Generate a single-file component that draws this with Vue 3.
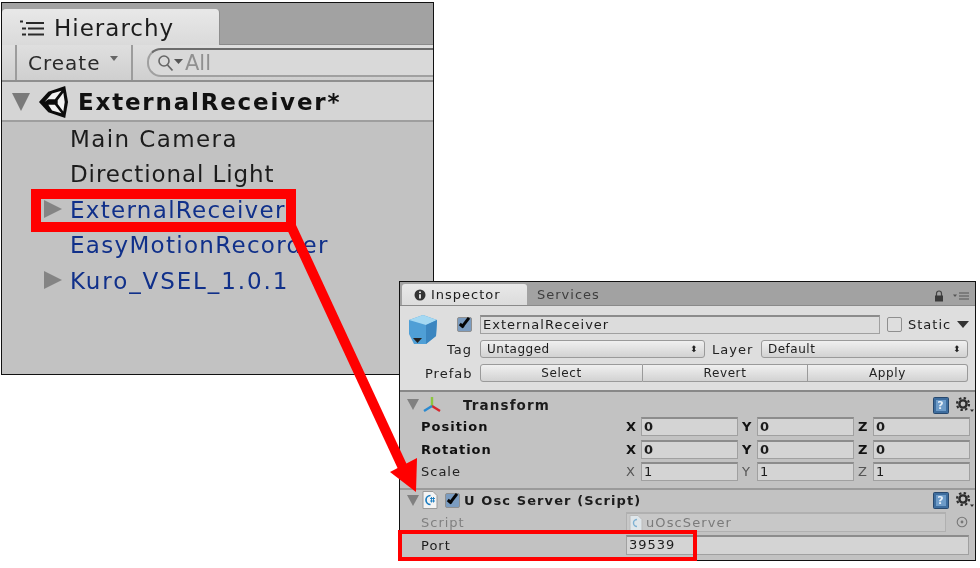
<script setup>
// spacing per row: the original font runs a little wider on some names
const hierarchyRows = [
  { name: 'Main Camera', prefab: false, arrow: false, spacing: 1.4 },
  { name: 'Directional Light', prefab: false, arrow: false, spacing: 0.9 },
  { name: 'ExternalReceiver', prefab: true, arrow: true, spacing: 1.3 },
  { name: 'EasyMotionRecorder', prefab: true, arrow: false, spacing: 1.3 },
  { name: 'Kuro_VSEL_1.0.1', prefab: true, arrow: true, spacing: 1.9 }
]

const vectorRows = [
  { label: 'Position', value: '0', bold: true },
  { label: 'Rotation', value: '0', bold: true },
  { label: 'Scale', value: '1', bold: false }
]

const axes = ['X', 'Y', 'Z']
</script>

<template>
  <div class="canvas">
    <!-- hierarchy window -->
    <section class="hierarchy">
      <div class="h-tabs">
        <div class="h-tab">
          <svg class="h-list-icon" viewBox="0 0 24 17">
            <path d="M0 1.500h3M6 3h18M2 8.500h4M8 8.500h16M2 14.500h4M8 14.500h16" stroke="#2a2a2a" stroke-width="2.200" fill="none" />
          </svg>
          <span>Hierarchy</span>
        </div>
      </div>
      <div class="h-toolbar">
        <div class="h-create">
          <span>Create</span>
          <i class="mini-caret"></i>
        </div>
        <div class="h-search">
          <svg class="h-search-icon" viewBox="0 0 28 18">
            <circle cx="7" cy="7" r="5" fill="none" stroke="#666" stroke-width="1.600" />
            <path d="M10.500 11l5 5.500" stroke="#666" stroke-width="1.800" />
            <path d="M17 5h9l-4.500 5z" fill="#555" />
          </svg>
          <span>All</span>
        </div>
      </div>
      <div class="h-scene">
        <i class="tri-down big"></i>
        <svg class="unity-logo" viewBox="0 0 32 34">
          <path d="M1 17L11 6 29 0l3 17-3 17-18-6z" fill="#0c0c0c" />
          <path d="M7 17l8-9 10-3-7 9h-7zM11 20h7l7 9-10-3zM21 15l6-8 1.500 10-1.500 10-6-8z" fill="#f2f2f2" />
        </svg>
        <span>ExternalReceiver*</span>
      </div>
      <ul class="h-list">
        <li v-for="row in hierarchyRows" :key="row.name" class="h-row" :class="{ prefab: row.prefab }">
          <i v-if="row.arrow" class="tri-right"></i>
          <span :style="{ letterSpacing: row.spacing + 'px' }">{{ row.name }}</span>
        </li>
      </ul>
    </section>

    <!-- inspector window -->
    <section class="inspector">
      <div class="i-tabs">
        <div class="i-tab">
          <svg class="info-icon" viewBox="0 0 12 12">
            <circle cx="6" cy="6" r="5.500" fill="#333" />
            <path d="M5 2.500h2v1.600H5zM5 5.200h2v4.300H5z" fill="#ddd" />
          </svg>
          <span>Inspector</span>
        </div>
        <span class="i-tab-off">Services</span>
        <div class="i-tab-tools">
          <svg class="lock-icon" viewBox="0 0 10 12">
            <path d="M2.500 6V3.500a2.500 2.500 0 0 1 5 0V6" fill="none" stroke="#444" stroke-width="1.200" />
            <rect x="1" y="5.500" width="8" height="6" fill="#3a3a3a" />
          </svg>
          <svg class="menu-icon" viewBox="0 0 16 8">
            <path d="M0 2.500h4L2 5z" fill="#555" />
            <path d="M6 1h10M6 4h10M6 7h10" stroke="#555" stroke-width="1" />
          </svg>
        </div>
      </div>

      <div class="i-head">
        <div class="i-head-grid">
          <svg class="cube-icon" viewBox="0 0 30 30">
            <path d="M1 5l14-5 14 5-1 16-10 8H6L1 19z" fill="#4f9fd6" />
            <path d="M1 5l14-5 14 5-11 5z" fill="#a4d8f2" />
            <path d="M18 10l11-5-1 16-10 8z" fill="#3b86c0" />
            <path d="M5 23h9l-4.500 5z" fill="#222" />
          </svg>
          <div class="i-head-rows">
            <div class="i-head-row first">
              <label class="check on"></label>
              <div class="text-field name">ExternalReceiver</div>
              <label class="check static"></label>
              <span class="static-label">Static</span>
              <i class="tri-down static-caret"></i>
            </div>
            <div class="i-head-row">
              <span class="i-label tag-label">Tag</span>
              <div class="popup tag"><span>Untagged</span><i class="updown">⬍</i></div>
              <span class="i-label layer-label">Layer</span>
              <div class="popup layer"><span>Default</span><i class="updown">⬍</i></div>
            </div>
            <div class="i-head-row">
              <span class="i-label tag-label">Prefab</span>
              <div class="prefab-btns">
                <button class="select-btn">Select</button>
                <button class="revert-btn">Revert</button>
                <button class="apply-btn">Apply</button>
              </div>
            </div>
          </div>
        </div>
      </div>

      <div class="comp-head">
        <i class="tri-down small"></i>
        <svg class="axes-icon" viewBox="0 0 20 20">
          <path d="M10 11V2" stroke="#8cc63f" stroke-width="2.400" />
          <path d="M10 11l8 5" stroke="#d9262c" stroke-width="2.400" />
          <path d="M10 11l-8 5" stroke="#2a8ad0" stroke-width="2.400" />
        </svg>
        <span class="comp-title transform">Transform</span>
        <svg class="help-icon" viewBox="0 0 16 17">
          <rect x="0.500" y="0.500" width="15" height="16" rx="1" fill="#3e6d9e" stroke="#27486e" />
          <rect x="3" y="3" width="10" height="11" fill="#6d9bc8" />
          <text x="8" y="12" text-anchor="middle" class="help-q">?</text>
        </svg>
        <svg class="gear-icon" viewBox="0 0 18 16">
          <circle cx="7" cy="7" r="3.600" fill="none" stroke="#2d2d2d" stroke-width="2.400" />
          <circle cx="7" cy="7" r="6" fill="none" stroke="#2d2d2d" stroke-width="2.200" stroke-dasharray="2.400 2.300" />
          <path d="M14 12.500h4l-2 2.500z" fill="#2d2d2d" />
        </svg>
      </div>
      <div class="vector-rows">
        <div v-for="row in vectorRows" :key="row.label" class="vector-row" :class="{ bold: row.bold }">
          <span class="vector-label">{{ row.label }}</span>
          <div v-for="axis in axes" :key="axis" class="vector-cell">
            <span class="axis">{{ axis }}</span>
            <div class="text-field num">{{ row.value }}</div>
          </div>
        </div>
      </div>

      <div class="comp-head second">
        <i class="tri-down small"></i>
        <svg class="script-icon" viewBox="0 0 16 18">
          <path d="M1 .500h10l4 4V17.500H1z" fill="#f4f4f4" stroke="#9a9a9a" />
          <path d="M8.500 4.500a4.500 4.500 0 1 0 0 9" fill="none" stroke="#1a7cc0" stroke-width="1.700" />
          <path d="M8 7.500h5M8 10h5M9.500 6v5.500M11.500 6v5.500" stroke="#1a7cc0" stroke-width="0.900" />
        </svg>
        <label class="check on small-check"></label>
        <span class="comp-title">U Osc Server (Script)</span>
        <svg class="help-icon" viewBox="0 0 16 17">
          <rect x="0.500" y="0.500" width="15" height="16" rx="1" fill="#3e6d9e" stroke="#27486e" />
          <rect x="3" y="3" width="10" height="11" fill="#6d9bc8" />
          <text x="8" y="12" text-anchor="middle" class="help-q">?</text>
        </svg>
        <svg class="gear-icon" viewBox="0 0 18 16">
          <circle cx="7" cy="7" r="3.600" fill="none" stroke="#2d2d2d" stroke-width="2.400" />
          <circle cx="7" cy="7" r="6" fill="none" stroke="#2d2d2d" stroke-width="2.200" stroke-dasharray="2.400 2.300" />
          <path d="M14 12.500h4l-2 2.500z" fill="#2d2d2d" />
        </svg>
      </div>
      <div class="script-row">
        <span class="field-label dim">Script</span>
        <div class="text-field script-field">
          <svg class="script-mini" viewBox="0 0 14 16">
            <path d="M1 .500h8l4 4V15.500H1z" fill="#dfe6ea" stroke="#bbb" />
            <path d="M8 4.500a3.500 3.500 0 1 0 0 7" fill="none" stroke="#7fb2d3" stroke-width="1.400" />
          </svg>
          <span>uOscServer</span>
        </div>
        <svg class="target-icon" viewBox="0 0 12 12">
          <circle cx="6" cy="6" r="4.800" fill="none" stroke="#777" stroke-width="1.100" />
          <circle cx="6" cy="6" r="1.400" fill="#777" />
        </svg>
      </div>
      <div class="port-row">
        <span class="field-label">Port</span>
        <div class="text-field port-field">39539</div>
      </div>
    </section>

    <!-- annotations -->
    <div class="mark mark-receiver"></div>
    <div class="mark mark-port"></div>
    <svg class="arrow" viewBox="0 0 980 568" width="980" height="568">
      <path d="M291 226L403 468" stroke="#ff0000" stroke-width="10" fill="none" />
      <path d="M416 492L390 472 417 458z" fill="#ff0000" />
    </svg>
  </div>
</template>

<style scoped>
.canvas {
  position: relative;
  width: 980px;
  height: 568px;
  background: #fff;
  overflow: hidden;
  font-family: "DejaVu Sans", sans-serif;
  color: #1c1c1c;
}

i {
  font-style: normal;
  display: block;
  flex: none;
}

/* hierarchy */
.hierarchy {
  position: absolute;
  left: 1px;
  top: 2px;
  width: 433px;
  height: 373px;
  box-sizing: border-box;
  border: 1px solid #111;
  background: #c2c2c2;
  filter: blur(0.6px);
  overflow: hidden;
}

.h-tabs {
  height: 42px;
  background: #a2a2a2;
  padding-top: 6px;
  box-sizing: border-box;
  border-bottom: 1px solid #8a8a8a;
}

.h-tab {
  width: 218px;
  height: 36px;
  box-sizing: border-box;
  background: linear-gradient(#e8e8e8, #dadada);
  border-radius: 4px 4px 0 0;
  border-right: 1px solid #8e8e8e;
  display: flex;
  align-items: center;
  padding: 2px 0 0 18px;
  gap: 10px;
  font-size: 23px;
  letter-spacing: 1px;
}

.h-list-icon {
  width: 24px;
  height: 17px;
}

.h-toolbar {
  height: 37px;
  display: flex;
  align-items: center;
  background: linear-gradient(#dfdfdf, #cfcfcf);
  border-bottom: 2px solid #8f8f8f;
  box-sizing: border-box;
  padding-left: 13px;
}

.h-create {
  width: 118px;
  height: 100%;
  box-sizing: border-box;
  border-left: 2px solid #9c9c9c;
  border-right: 2px solid #9c9c9c;
  display: flex;
  align-items: center;
  padding-left: 11px;
  gap: 10px;
  font-size: 20px;
  letter-spacing: 1px;
  color: #2a2a2a;
}

.mini-caret {
  width: 0;
  height: 0;
  border-left: 4px solid transparent;
  border-right: 4px solid transparent;
  border-top: 5px solid #666;
  margin-bottom: 8px;
}

.h-search {
  margin-left: 14px;
  flex: 1;
  height: 29px;
  box-sizing: border-box;
  border: 2px solid #a0a0a0;
  border-top-color: #6c6c6c;
  border-right: none;
  border-radius: 14px 0 0 14px;
  background: #d9d9d9;
  display: flex;
  align-items: center;
  padding-left: 8px;
  font-size: 21px;
  color: #909090;
}

.h-search-icon {
  width: 28px;
  height: 18px;
}

.h-scene {
  height: 40px;
  display: flex;
  align-items: center;
  background: #d5d5d5;
  border-bottom: 2px solid #9e9e9e;
  box-sizing: border-box;
  padding: 2px 0 0 10px;
  font-size: 23px;
  font-weight: 700;
  letter-spacing: 1.8px;
  color: #111;
}

.tri-down {
  width: 0;
  height: 0;
  border-left: 9.500px solid transparent;
  border-right: 9.500px solid transparent;
  border-top: 18px solid #7a7a7a;
}

.unity-logo {
  width: 30px;
  height: 34px;
  margin: 0 10px 0 8px;
  flex: none;
}

.h-list {
  list-style: none;
  margin: -1px 0 0;
  padding: 0;
}

.h-row {
  height: 35.500px;
  position: relative;
  padding-left: 68px;
  display: flex;
  align-items: center;
  font-size: 23px;
  color: #1c1c1c;
}

.h-row.prefab {
  color: #10308a;
}

.tri-right {
  position: absolute;
  left: 42px;
  top: 8px;
  width: 0;
  height: 0;
  border-top: 9px solid transparent;
  border-bottom: 9px solid transparent;
  border-left: 18px solid #848484;
}

/* inspector */
.inspector {
  position: absolute;
  left: 399px;
  top: 281px;
  width: 577px;
  height: 280px;
  box-sizing: border-box;
  border: 1px solid #111;
  background: #c2c2c2;
  filter: blur(0.45px);
  overflow: hidden;
  font-size: 13px;
  letter-spacing: 1px;
}

.i-tabs {
  height: 24px;
  background: #a2a2a2;
  display: flex;
  align-items: flex-end;
  padding-left: 2px;
  box-sizing: border-box;
  border-bottom: 1px solid #8a8a8a;
}

.i-tab {
  width: 125px;
  height: 21px;
  background: linear-gradient(#e8e8e8, #dcdcdc);
  border-radius: 3px 3px 0 0;
  display: flex;
  align-items: center;
  padding-left: 12px;
  box-sizing: border-box;
  gap: 5px;
}

.info-icon {
  width: 12px;
  height: 12px;
}

.i-tab-off {
  margin-left: 10px;
  height: 21px;
  line-height: 21px;
  color: #3e3e3e;
}

.i-tab-tools {
  margin-left: auto;
  display: flex;
  align-items: center;
  gap: 9px;
  padding: 0 6px 3px 0;
}

.lock-icon {
  width: 10px;
  height: 12px;
}

.menu-icon {
  width: 16px;
  height: 8px;
}

.i-head {
  height: 86px;
  background: #dedede;
  border-bottom: 2px solid #888;
  box-sizing: border-box;
}

.i-head-grid {
  display: flex;
  padding: 9px 0 0 8px;
}

.cube-icon {
  width: 30px;
  height: 30px;
  flex: none;
}

.i-head-rows {
  display: flex;
  flex-direction: column;
  gap: 6px;
  margin-left: 1px;
}

.i-head-row {
  display: flex;
  align-items: center;
  height: 18px;
}

.i-head-row.first {
  height: 19px;
}

.check {
  display: block;
  width: 15px;
  height: 15px;
  box-sizing: border-box;
  border: 1px solid #8f8f8f;
  border-radius: 2px;
  background: #dcdcdc;
  position: relative;
  flex: none;
}

.check.on {
  margin: 0 8px 0 18px;
  background: #7b9cc0;
}

.check.on::after {
  content: '';
  position: absolute;
  left: 4px;
  top: -2px;
  width: 5px;
  height: 12px;
  box-sizing: border-box;
  border: solid #050505;
  border-width: 0 3px 3px 0;
  transform: rotate(38deg);
}

.text-field {
  box-sizing: border-box;
  height: 19px;
  line-height: 15px;
  background: #d4d4d4;
  border: 1px solid #a0a0a0;
  border-top: 2px solid #8c8c8c;
  padding-left: 2px;
  color: #1c1c1c;
}

.text-field.name {
  width: 400px;
  background: #dcdcdc;
}

.check.static {
  margin-left: 7px;
  background: #dedede;
}

.static-label {
  margin-left: 6px;
}

.static-caret {
  margin-left: 6px;
  border-left-width: 6.500px;
  border-right-width: 6.500px;
  border-top: 7px solid #333;
}

.i-label {
  color: #222;
}

.tag-label {
  width: 47px;
  margin: 0 8px 0 -14px;
  flex: none;
  text-align: right;
}

.layer-label {
  width: 40px;
  flex: none;
  margin: 0 9px 0 7px;
}

.popup {
  box-sizing: border-box;
  height: 18px;
  border: 1px solid #9a9a9a;
  border-radius: 3px;
  background: linear-gradient(#f0f0f0, #d2d2d2);
  display: flex;
  align-items: center;
  justify-content: space-between;
  padding: 0 6px;
  font-size: 12px;
  letter-spacing: 0.5px;
}

.popup.tag {
  width: 225px;
}

.popup.layer {
  width: 207px;
}

.updown {
  font-size: 9px;
  color: #222;
}

.prefab-btns {
  display: flex;
  width: 488px;
}

.prefab-btns button {
  flex: none;
  height: 18px;
  padding: 0;
  box-sizing: border-box;
  border: 1px solid #9a9a9a;
  background: linear-gradient(#f0f0f0, #d2d2d2);
  font-family: inherit;
  font-size: 12px;
  letter-spacing: 0.6px;
  color: #222;
}

.select-btn {
  width: 163px;
  border-radius: 3px 0 0 3px;
}

.revert-btn {
  width: 165px;
  border-left: none !important;
}

.apply-btn {
  width: 160px;
  border-left: none !important;
  border-radius: 0 3px 3px 0;
}

.comp-head {
  height: 25px;
  display: flex;
  align-items: center;
  padding-left: 7px;
  position: relative;
}

.tri-down.small {
  border-left-width: 6px;
  border-right-width: 6px;
  border-top: 11px solid #808080;
}

.axes-icon {
  width: 20px;
  height: 20px;
  margin-left: 3px;
  flex: none;
}

.comp-title {
  font-weight: 700;
  letter-spacing: 1.100px;
}

.comp-title.transform {
  margin-left: 21px;
  font-size: 13.500px;
}

.help-icon {
  position: absolute;
  left: 533px;
  top: 5px;
  width: 16px;
  height: 17px;
}

.help-q {
  font-size: 11px;
  font-weight: 700;
  fill: #e4eef8;
  font-family: "DejaVu Sans", sans-serif;
}

.gear-icon {
  position: absolute;
  left: 556px;
  top: 5px;
  width: 18px;
  height: 16px;
}

.vector-rows {
  display: flex;
  flex-direction: column;
  gap: 3.500px;
}

.vector-row {
  display: flex;
  height: 19px;
  align-items: center;
  color: #222;
}

.vector-label {
  width: 226px;
  padding-left: 21px;
  box-sizing: border-box;
  flex: none;
}

.vector-row.bold {
  font-weight: 700;
  color: #111;
}

.vector-cell {
  width: 116px;
  display: flex;
  align-items: center;
  flex: none;
}

.axis {
  width: 15px;
  flex: none;
  font-size: 13px;
  letter-spacing: 0;
}

.vector-row:not(.bold) .axis {
  color: #555;
}

.text-field.num {
  width: 97px;
  background: #d4d4d4;
}

.comp-head.second {
  height: 20px;
  margin-top: 7px;
  border-top: 2px solid #9a9a9a;
  box-sizing: content-box;
}

.comp-head.second .help-icon,
.comp-head.second .gear-icon {
  top: 2px;
}

.script-icon {
  width: 16px;
  height: 18px;
  margin-left: 3px;
  flex: none;
}

.check.small-check {
  margin: 0 4px 0 7px;
}

.script-row,
.port-row {
  display: flex;
  align-items: center;
  height: 20px;
  margin-top: 2px;
}

.port-row {
  margin-top: 3px;
}

.field-label {
  width: 226px;
  padding-left: 21px;
  box-sizing: border-box;
  flex: none;
}

.field-label.dim {
  color: #808080;
}

.script-field {
  width: 320px;
  height: 20px;
  display: flex;
  align-items: center;
  gap: 3px;
  color: #7a7a7a;
  background: #c8c8c8;
  border-top-color: #aaa;
  border-color: #b0b0b0;
  letter-spacing: 1.100px;
}

.script-mini {
  width: 14px;
  height: 16px;
  flex: none;
}

.target-icon {
  width: 12px;
  height: 12px;
  margin-left: 10px;
}

.port-field {
  width: 343px;
  height: 20px;
}

/* red annotations */
.mark {
  position: absolute;
  box-sizing: border-box;
  border-style: solid;
  border-color: #ff0000;
}

.mark-receiver {
  left: 31px;
  top: 189px;
  width: 265px;
  height: 43px;
  border-width: 10px;
}

.mark-port {
  left: 398px;
  top: 530px;
  width: 299px;
  height: 31px;
  border-width: 4px;
}

.arrow {
  position: absolute;
  left: 0;
  top: 0;
  pointer-events: none;
}
</style>
